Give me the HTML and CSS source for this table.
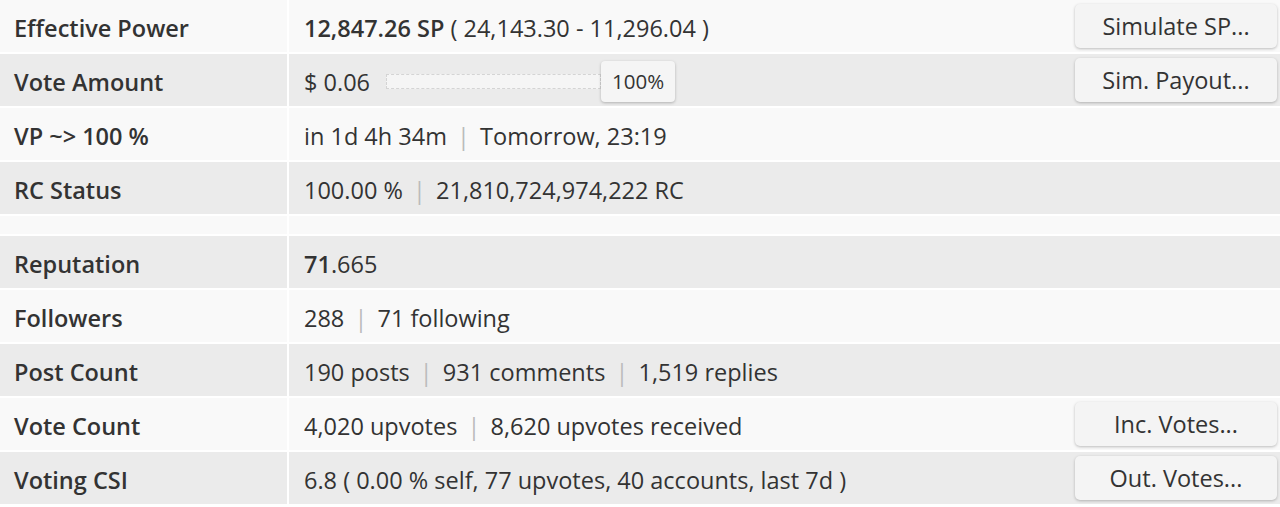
FILE: index.html
```html
<!DOCTYPE html>
<html>
<head>
<meta charset="utf-8">
<link rel="stylesheet" href="styles.css">
</head>
<body>
<div class="stats">
  <div class="row light">
    <div class="label">Effective Power</div>
    <div class="value"><span><b>12,847.26 SP</b> ( 24,143.30 - 11,296.04 )</span><button class="btn">Simulate SP...</button></div>
  </div>
  <div class="row grey">
    <div class="label">Vote Amount</div>
    <div class="value"><span>$ 0.06</span><div class="slider"><div class="track"></div><div class="thumb">100%</div></div><button class="btn">Sim. Payout...</button></div>
  </div>
  <div class="row light">
    <div class="label">VP ~&gt; 100 %</div>
    <div class="value"><span>in 1d 4h 34m <i class="sep">|</i> Tomorrow, 23:19</span></div>
  </div>
  <div class="row grey">
    <div class="label">RC Status</div>
    <div class="value"><span>100.00 % <i class="sep">|</i> 21,810,724,974,222 RC</span></div>
  </div>
  <div class="row light empty">
    <div class="label"></div>
    <div class="value"></div>
  </div>
  <div class="row grey">
    <div class="label">Reputation</div>
    <div class="value"><span><b>71</b>.665</span></div>
  </div>
  <div class="row light">
    <div class="label">Followers</div>
    <div class="value"><span>288 <i class="sep">|</i> 71 following</span></div>
  </div>
  <div class="row grey">
    <div class="label">Post Count</div>
    <div class="value"><span>190 posts <i class="sep">|</i> 931 comments <i class="sep">|</i> 1,519 replies</span></div>
  </div>
  <div class="row light">
    <div class="label">Vote Count</div>
    <div class="value"><span>4,020 upvotes <i class="sep">|</i> 8,620 upvotes received</span><button class="btn">Inc. Votes...</button></div>
  </div>
  <div class="row grey">
    <div class="label">Voting CSI</div>
    <div class="value"><span>6.8 ( 0.00 % self, 77 upvotes, 40 accounts, last 7d )</span><button class="btn">Out. Votes...</button></div>
  </div>
</div>
</body>
</html>
```
FILE: styles.css
```css
html, body {
  margin: 0;
  padding: 0;
  background: #ffffff;
}
body {
  font-family: "Open Sans", "Noto Sans", sans-serif;
  font-size: 23.5px;
  color: #333333;
}
.stats {
  display: grid;
  row-gap: 2px;
}
.row {
  display: grid;
  grid-template-columns: 287px 1fr;
  column-gap: 2px;
  height: 52px;
}
.row.empty {
  height: 18px;
}
.row.light > div {
  background: #f9f9f9;
}
.row.grey > div {
  background: #ebebeb;
}
.label {
  display: flex;
  align-items: center;
  padding-left: 14px;
  padding-top: 4px;
  font-weight: 600;
}
.value {
  display: flex;
  align-items: center;
  padding-left: 15px;
  padding-top: 4px;
  white-space: nowrap;
}
.value b {
  font-weight: 600;
}
.sep {
  font-style: normal;
  color: #bbbbbb;
  padding: 0 4px;
}
.slider {
  display: flex;
  align-items: center;
  margin-left: 16px;
  margin-top: -2px;
}
.track {
  width: 213px;
  height: 13px;
  border: 1px dashed #d4d4d4;
  background: #f5f5f5;
}
.thumb {
  width: 74px;
  height: 41px;
  box-sizing: border-box;
  display: flex;
  align-items: center;
  justify-content: center;
  background: #f5f5f5;
  border-radius: 4px;
  box-shadow: 0 1px 3px rgba(0, 0, 0, 0.25);
  font-size: 20.5px;
}
.btn {
  margin-left: auto;
  margin-right: 3px;
  margin-top: -4px;
  width: 202px;
  height: 44px;
  border: none;
  border-radius: 5px;
  background: #f4f4f4;
  box-shadow: 0 1px 3px rgba(0, 0, 0, 0.25);
  font-family: "Open Sans", "Noto Sans", sans-serif;
  font-size: 23.5px;
  color: #333333;
  padding: 0;
}
```
